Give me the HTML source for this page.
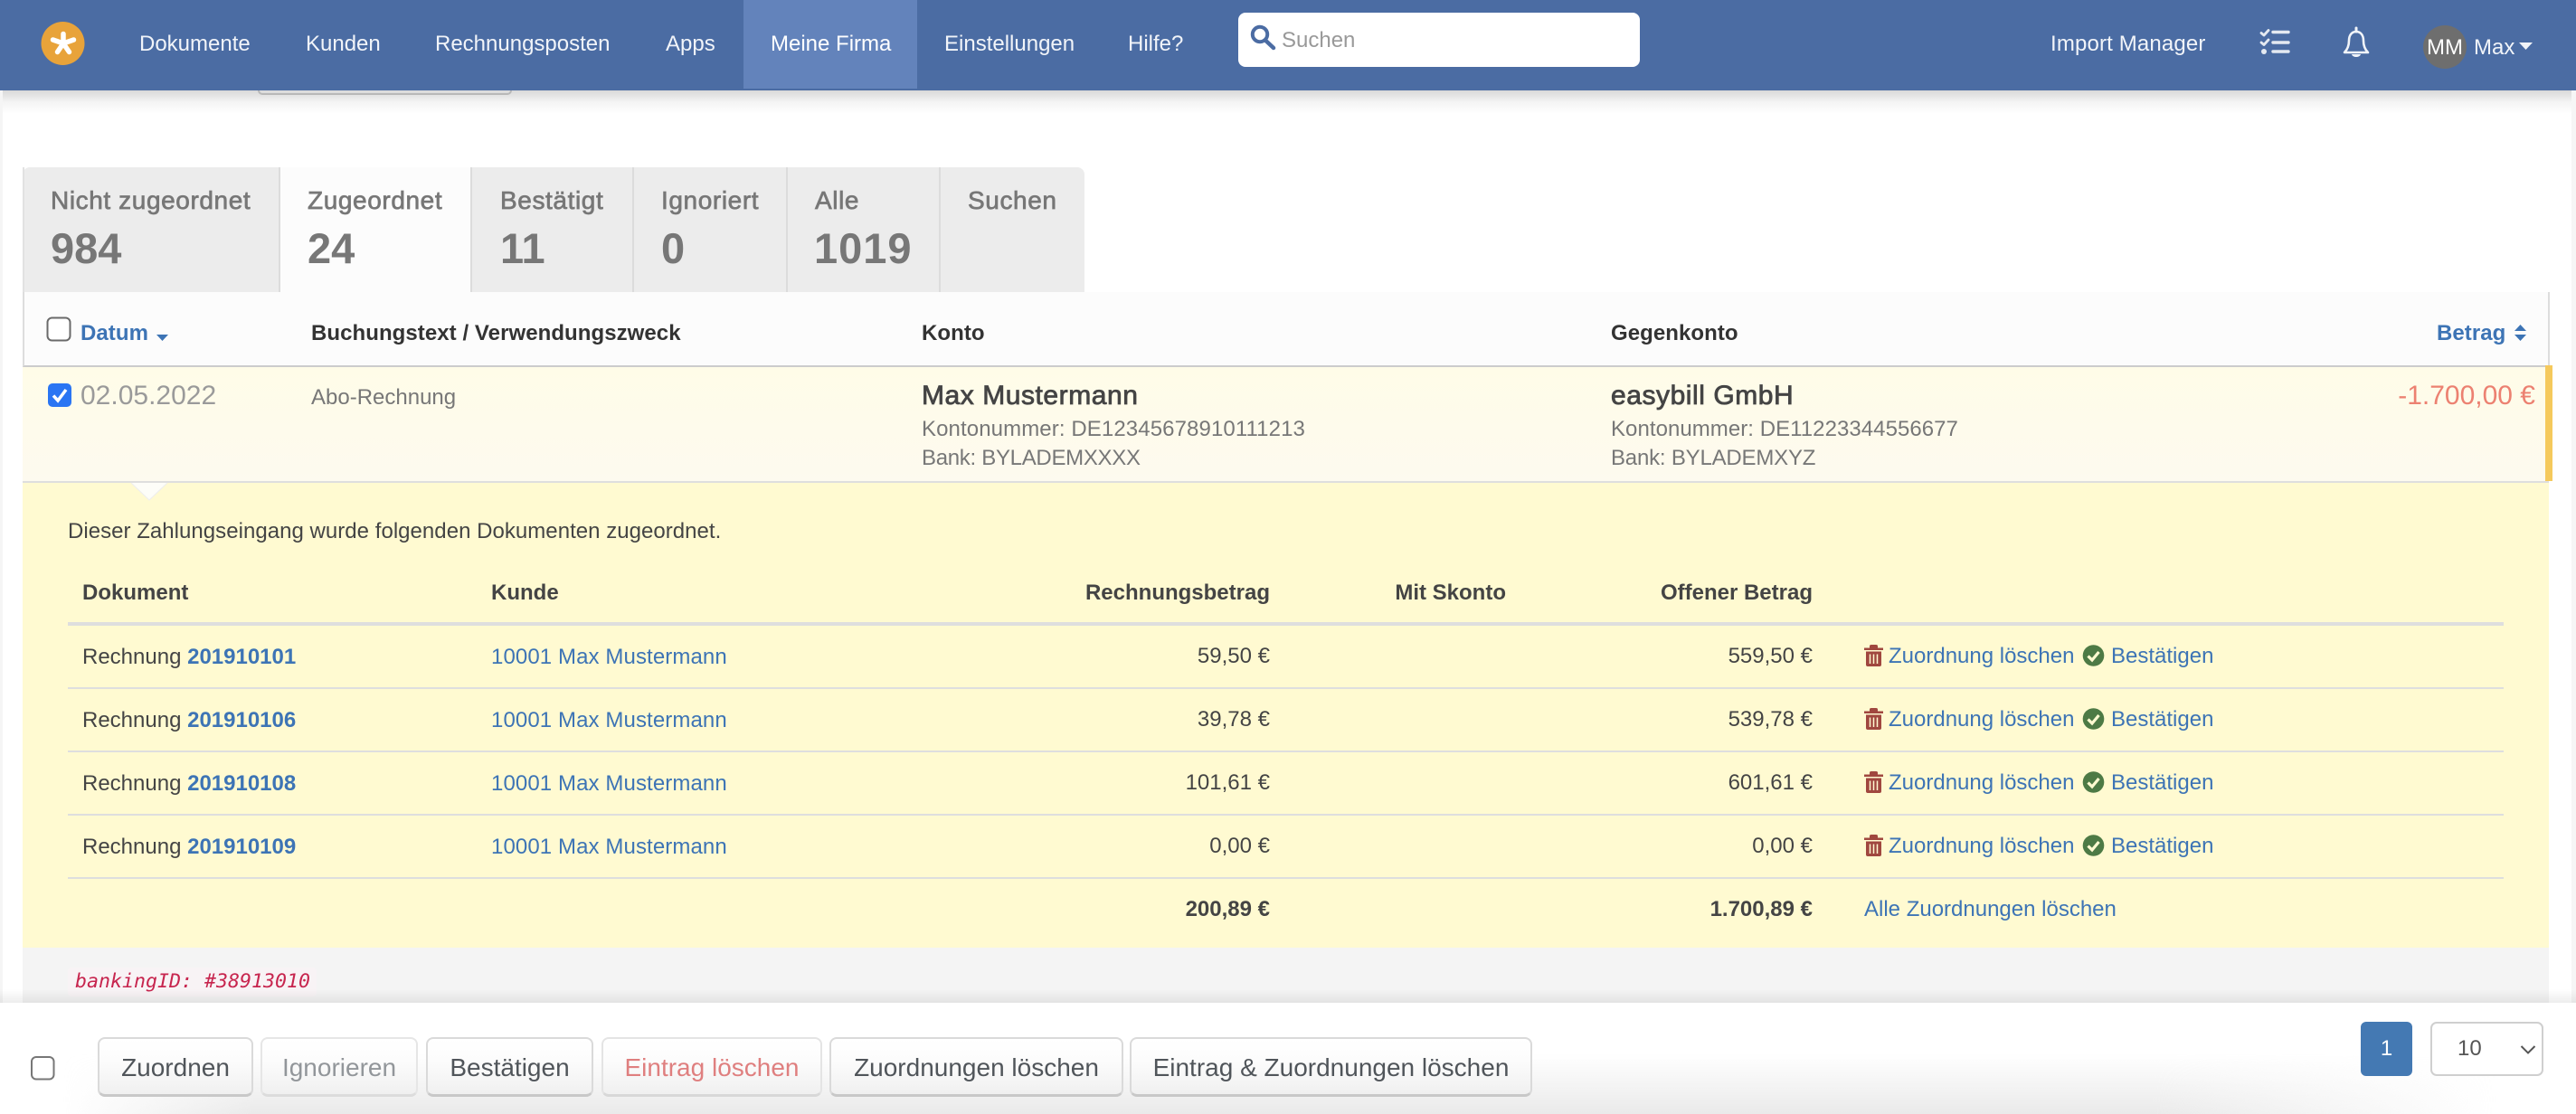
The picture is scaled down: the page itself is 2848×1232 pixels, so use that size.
<!DOCTYPE html>
<html lang="de"><head><meta charset="utf-8"><title>Banking</title>
<style>
html,body{margin:0;padding:0;width:2848px;height:1232px;overflow:hidden;background:#fff;font-family:"Liberation Sans",Arial,sans-serif;}
.b{position:absolute;box-sizing:border-box}
.t{position:absolute;white-space:nowrap;line-height:40px;height:40px;font-size:24px}
.r{text-align:right}
.nav{color:#f1f4f9}
.tl{font-size:28px;color:#777;-webkit-text-stroke:.7px #777;letter-spacing:.6px}
.tn{font-size:47px;line-height:50px;height:50px;color:#777;font-weight:bold}
.h{font-weight:bold;color:#333;letter-spacing:.06px}
.g{color:#777}
.d{color:#444}
.l{color:#3d74b5}
.lk{letter-spacing:.1px}
.hb{font-weight:bold;color:#444}
.n{font-weight:bold;color:#3d74b5}
.m{font-size:30px;color:#444;-webkit-text-stroke:.8px #444;letter-spacing:.55px}
.btn{position:absolute;box-sizing:border-box;top:1147px;height:66px;border:2px solid #dadada;border-bottom:3px solid #c8c8c8;border-radius:8px;background:linear-gradient(#fff,#fcfcfc 40%,#f0f0f0);font-size:28px;line-height:64px;text-align:center;color:#50555a;white-space:nowrap}
.sep{position:absolute;left:75px;width:2693px;height:2px;background:#dedede}
</style></head><body>

<div class="b" style="left:0;top:100px;width:2848px;height:26px;background:linear-gradient(#d9d9d9,#f4f4f4 50%,#fff)"></div>
<div class="b" style="left:0;top:100px;width:3px;height:1010px;background:#f5f5f5"></div>
<div class="b" style="left:2843px;top:100px;width:5px;height:1010px;background:#f6f6f6"></div>
<div class="b" style="left:285px;top:100px;width:281px;height:5px;background:#dcdcdc;border:2px solid #b8b8b8;border-top:0;border-radius:0 0 5px 5px"></div>

<div class="b" style="left:0;top:0;width:2848px;height:100px;background:#4b6ca3"></div>
<div class="b" style="left:822px;top:0;width:192px;height:98px;background:#6383bb"></div>
<div class="t nav" style="left:154px;top:29px">Dokumente</div>
<div class="t nav" style="left:338px;top:29px">Kunden</div>
<div class="t nav" style="left:481px;top:29px">Rechnungsposten</div>
<div class="t nav" style="left:736px;top:29px">Apps</div>
<div class="t nav" style="left:852px;top:29px;color:#fff">Meine Firma</div>
<div class="t nav" style="left:1044px;top:29px">Einstellungen</div>
<div class="t nav" style="left:1247px;top:29px">Hilfe?</div>
<div class="b" style="left:1369px;top:14px;width:444px;height:60px;background:#fff;border-radius:8px"></div>
<div class="t" style="left:1417px;top:25px;color:#999">Suchen</div>
<div class="t nav" style="left:2267px;top:29px;letter-spacing:.15px">Import Manager</div>
<div class="b" style="left:2679px;top:28px;width:48px;height:48px;border-radius:50%;background:#6e6e6e"></div>
<div class="t" style="left:2679px;width:48px;top:33px;text-align:center;color:#fff;font-size:24px">MM</div>
<div class="t nav" style="left:2735px;top:33px">Max</div>

<!-- tabs -->
<div class="b" style="left:25px;top:185px;width:1174px;height:138px;background:#ececec;border-radius:8px 8px 0 0"></div>
<div class="b" style="left:309px;top:185px;width:211px;height:138px;background:#fcfcfc"></div>
<div class="b" style="left:25px;top:185px;width:2px;height:138px;background:#e2e2e2"></div>
<div class="b" style="left:308px;top:185px;width:2px;height:138px;background:#dcdcdc"></div>
<div class="b" style="left:520px;top:185px;width:2px;height:138px;background:#dcdcdc"></div>
<div class="b" style="left:699px;top:185px;width:2px;height:138px;background:#dcdcdc"></div>
<div class="b" style="left:869px;top:185px;width:2px;height:138px;background:#dcdcdc"></div>
<div class="b" style="left:1038px;top:185px;width:2px;height:138px;background:#dcdcdc"></div>
<div class="t tl" style="left:56px;top:202px">Nicht zugeordnet</div><div class="t tn" style="left:56px;top:250px">984</div>
<div class="t tl" style="left:340px;top:202px">Zugeordnet</div><div class="t tn" style="left:340px;top:250px">24</div>
<div class="t tl" style="left:553px;top:202px">Bestätigt</div><div class="t tn" style="left:553px;top:250px">11</div>
<div class="t tl" style="left:731px;top:202px">Ignoriert</div><div class="t tn" style="left:731px;top:250px">0</div>
<div class="t tl" style="left:901px;top:202px">Alle</div><div class="t tn" style="left:900px;top:250px;letter-spacing:1px">1019</div>
<div class="t tl" style="left:1070px;top:202px">Suchen</div>

<!-- table header -->
<div class="b" style="left:25px;top:323px;width:2794px;height:83px;background:#fcfcfc;border-left:2px solid #ddd;border-right:2px solid #ddd;border-bottom:2px solid #ccc"></div>
<div class="t h" style="left:89px;top:349px;color:#3d74b5">Datum</div>
<div class="t h" style="left:344px;top:349px">Buchungstext / Verwendungszweck</div>
<div class="t h" style="left:1019px;top:349px">Konto</div>
<div class="t h" style="left:1781px;top:349px">Gegenkonto</div>
<div class="t h" style="left:2694px;top:349px;color:#3d74b5">Betrag</div>

<!-- row -->
<div class="b" style="left:25px;top:406px;width:2793px;height:128px;background:linear-gradient(#fffce8,#fdfaef);border-bottom:2px solid #dedede"></div>
<div class="b" style="left:2814px;top:404px;width:8px;height:128px;background:#f5c95c"></div>
<div class="t" style="left:89px;top:418px;font-size:30px;color:#9a9a9a">02.05.2022</div>
<div class="t g" style="left:344px;top:420px">Abo-Rechnung</div>
<div class="t m" style="left:1019px;top:418px">Max Mustermann</div>
<div class="t g" style="left:1019px;top:455px;letter-spacing:.1px">Kontonummer: DE12345678910111213</div>
<div class="t g" style="left:1019px;top:487px;letter-spacing:-.3px">Bank: BYLADEMXXXX</div>
<div class="t m" style="left:1781px;top:418px">easybill GmbH</div>
<div class="t g" style="left:1781px;top:455px;letter-spacing:.05px">Kontonummer: DE11223344556677</div>
<div class="t g" style="left:1781px;top:487px;letter-spacing:-.2px">Bank: BYLADEMXYZ</div>
<div class="t r" style="right:45px;top:418px;font-size:30px;color:#ec8171">-1.700,00 €</div>

<!-- yellow panel -->
<div class="b" style="left:25px;top:534px;width:2793px;height:514px;background:#fffad1"></div>
<div class="t d" style="left:75px;top:568px;letter-spacing:.03px">Dieser Zahlungseingang wurde folgenden Dokumenten zugeordnet.</div>
<div class="t hb" style="left:91px;top:636px">Dokument</div>
<div class="t hb" style="left:543px;top:636px">Kunde</div>
<div class="t hb r" style="right:1444px;top:636px">Rechnungsbetrag</div>
<div class="t hb r" style="right:1183px;top:636px">Mit Skonto</div>
<div class="t hb r" style="right:844px;top:636px">Offener Betrag</div>
<div class="b" style="left:75px;top:688px;width:2693px;height:4px;background:#dedede"></div>

<div class="t d" style="left:91px;top:707px">Rechnung <span class="n">201910101</span></div>
<div class="t l lk" style="left:543px;top:707px">10001 Max Mustermann</div>
<div class="t d r" style="right:1444px;top:706px">59,50 €</div>
<div class="t d r" style="right:844px;top:706px">559,50 €</div>
<div class="t l" style="left:2088px;top:706px">Zuordnung löschen</div>
<div class="t l" style="left:2334px;top:706px">Bestätigen</div>
<div class="sep" style="top:760px"></div>

<div class="t d" style="left:91px;top:777px">Rechnung <span class="n">201910106</span></div>
<div class="t l lk" style="left:543px;top:777px">10001 Max Mustermann</div>
<div class="t d r" style="right:1444px;top:776px">39,78 €</div>
<div class="t d r" style="right:844px;top:776px">539,78 €</div>
<div class="t l" style="left:2088px;top:776px">Zuordnung löschen</div>
<div class="t l" style="left:2334px;top:776px">Bestätigen</div>
<div class="sep" style="top:830px"></div>

<div class="t d" style="left:91px;top:847px">Rechnung <span class="n">201910108</span></div>
<div class="t l lk" style="left:543px;top:847px">10001 Max Mustermann</div>
<div class="t d r" style="right:1444px;top:846px">101,61 €</div>
<div class="t d r" style="right:844px;top:846px">601,61 €</div>
<div class="t l" style="left:2088px;top:846px">Zuordnung löschen</div>
<div class="t l" style="left:2334px;top:846px">Bestätigen</div>
<div class="sep" style="top:900px"></div>

<div class="t d" style="left:91px;top:917px">Rechnung <span class="n">201910109</span></div>
<div class="t l lk" style="left:543px;top:917px">10001 Max Mustermann</div>
<div class="t d r" style="right:1444px;top:916px">0,00 €</div>
<div class="t d r" style="right:844px;top:916px">0,00 €</div>
<div class="t l" style="left:2088px;top:916px">Zuordnung löschen</div>
<div class="t l" style="left:2334px;top:916px">Bestätigen</div>
<div class="sep" style="top:970px"></div>

<div class="t hb r" style="right:1444px;top:986px">200,89 €</div>
<div class="t hb r" style="right:844px;top:986px">1.700,89 €</div>
<div class="t l" style="left:2061px;top:986px">Alle Zuordnungen löschen</div>

<!-- grey debug -->
<div class="b" style="left:25px;top:1048px;width:2793px;height:62px;background:#f4f4f4"></div>
<div class="b" style="left:75px;top:1070px;width:275px;height:32px;background:#f8f3f5;border-radius:4px"></div>
<div class="t" style="left:83px;top:1066px;font-family:'DejaVu Sans Mono','Liberation Mono',monospace;font-style:italic;font-size:21.6px;color:#c7254e">bankingID: #38913010</div>

<!-- footer -->
<div class="b" style="left:0;top:1094px;width:2848px;height:15px;background:linear-gradient(rgba(0,0,0,0),rgba(0,0,0,.07))"></div>
<div class="b" style="left:0;top:1109px;width:2848px;height:123px;background:#fff"></div>
<div class="b" style="left:0;top:1165px;width:2848px;height:67px;background:linear-gradient(rgba(225,225,225,0),rgba(225,225,225,.7));-webkit-mask-image:linear-gradient(90deg,transparent 70px,#000 280px,#000 2380px,transparent 2760px);mask-image:linear-gradient(90deg,transparent 70px,#000 280px,#000 2380px,transparent 2760px)"></div>
<div class="btn" style="left:108px;width:172px">Zuordnen</div>
<div class="btn" style="left:288px;width:174px;color:#92969a;border-color:#e6e6e6;border-bottom-color:#dcdcdc">Ignorieren</div>
<div class="btn" style="left:471px;width:185px">Bestätigen</div>
<div class="btn" style="left:665px;width:244px;color:#df7f7f;border-color:#e4e4e4;border-bottom-color:#d8d8d8">Eintrag löschen</div>
<div class="btn" style="left:917px;width:325px">Zuordnungen löschen</div>
<div class="btn" style="left:1249px;width:445px">Eintrag &amp; Zuordnungen löschen</div>
<div class="b" style="left:2610px;top:1130px;width:57px;height:60px;background:#4479b3;border-radius:6px;color:#fff;font-size:24px;line-height:60px;text-align:center">1</div>
<div class="b" style="left:2687px;top:1130px;width:125px;height:60px;background:#fff;border:2px solid #cfcfcf;border-radius:7px"></div>
<div class="t" style="left:2717px;top:1140px;color:#555">10</div>

<!-- icons -->
<svg class="b" style="left:0;top:0;pointer-events:none" width="2848" height="1232" viewBox="0 0 2848 1232" fill="none">
  <circle cx="69.500" cy="48" r="24" fill="#e8a33a"/>
  <g stroke="#fff" stroke-width="5.500" stroke-linecap="round">
    <path d="M70 48V37.500M70 48L81.500 44M70 48L76.500 57.500M70 48L63.500 57.500M70 48L58.500 44"/>
  </g>
  <circle cx="1393" cy="38" r="8.200" stroke="#4b6ca3" stroke-width="4"/>
  <path d="M1399.500 45L1408 53" stroke="#4b6ca3" stroke-width="4.500" stroke-linecap="round"/>
  <g stroke="#e4e9f1" stroke-width="3.400" stroke-linecap="round" stroke-linejoin="round">
    <path d="M2513 35.500H2530M2513 47H2530M2513 57H2530"/>
    <path d="M2500 36.500L2503 39L2508 33.500M2500 47L2503 49.500L2508 44" stroke-width="2.800"/>
  </g>
  <circle cx="2503" cy="57" r="3" fill="#e4e9f1"/>
  <path d="M2592 58H2618C2614 54 2613 50 2613 45C2613 39 2610 35 2605 35C2600 35 2597 39 2597 45C2597 50 2596 54 2592 58Z" stroke="#f1f4f9" stroke-width="2.600" stroke-linejoin="round"/>
  <path d="M2605 31V35" stroke="#f1f4f9" stroke-width="3" stroke-linecap="round"/>
  <path d="M2600 60H2610C2609 64 2601 64 2600 60Z" fill="#f1f4f9"/>
  <path d="M2785 47H2800L2792.500 55Z" fill="#f1f4f9"/>

  <rect x="52.500" y="351.500" width="25" height="25" rx="5" stroke="#6a6a6a" stroke-width="2" fill="#fff"/>
  <path d="M173 370H186L179.500 377Z" fill="#3d74b5"/>
  <path d="M2780 366L2786.500 359L2793 366ZM2780 370H2793L2786.500 377Z" fill="#3d74b5"/>

  <rect x="53" y="424" width="26" height="26" rx="5" fill="#2a75f3"/>
  <path d="M59 437.500L64 443L73 431" stroke="#fff" stroke-width="3.500"/>

  <path d="M145 534H185L165 553Z" fill="#fdfdf8"/>
  <path d="M145 534L165 553L185 534" stroke="#eeeeee" stroke-width="1"/>

  <rect x="35" y="1169" width="24.500" height="24.500" rx="5" stroke="#777" stroke-width="2" fill="#fff"/>
  <path d="M2787.500 1157L2795 1164.500L2802.500 1157" stroke="#555" stroke-width="2"/>
  <use href="#ic" y="0"/><use href="#ic" y="70"/><use href="#ic" y="140"/><use href="#ic" y="210"/>
  <defs><g id="ic">
    <path d="M2061 716.500H2082V719H2061ZM2067 716.500V714.500Q2067 713 2069 713H2074Q2076 713 2076 714.500V716.500Z" fill="#a0473f"/>
    <path d="M2063 720.500H2080V735Q2080 737 2078 737H2065Q2063 737 2063 735Z" fill="#a0473f"/>
    <path d="M2067.500 723.500V734M2071.500 723.500V734M2075.500 723.500V734" stroke="#fffad1" stroke-width="1.500"/>
    <circle cx="2314.500" cy="725" r="11.800" fill="#4d7a45"/>
    <path d="M2308.500 725.500L2313 730L2320.500 721" stroke="#fffad1" stroke-width="3.200"/>
  </g></defs>
</svg>
</body></html>
